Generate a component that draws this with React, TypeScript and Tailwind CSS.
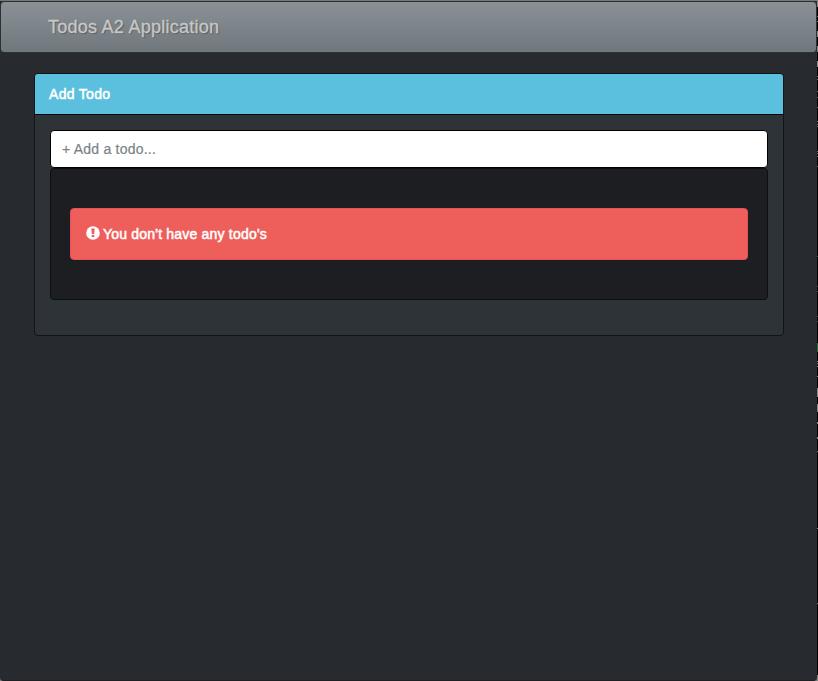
function AlertIcon() {
  return (
    <svg viewBox="0 0 14 14" className="mr-[3px] mb-[2px] size-[14px] shrink-0">
      <circle cx="7" cy="7" r="6.8" fill="#fff" />
      <path d="M5.3 2.6h3.4l-.5 5.3H5.8z" fill="#ee5f5b" />
      <rect x="5.7" y="8.9" width="2.6" height="2.2" fill="#ee5f5b" />
    </svg>
  );
}

const edgeMarks = [
  { y: 0, h: 7, fill: "#858585" },
  { y: 16, h: 1, fill: "#737373" },
  { y: 21, h: 1, fill: "#737373" },
  { y: 31, h: 6, fill: "#858585" },
  { y: 46, h: 6, fill: "#858585" },
  { y: 61, h: 6, fill: "#858585" },
  { y: 76, h: 1, fill: "#737373" },
  { y: 79, h: 1, fill: "#737373" },
  { y: 91, h: 1, fill: "#737373" },
  { y: 97, h: 1, fill: "#737373" },
  { y: 107, h: 1, fill: "#737373" },
  { y: 121, h: 1, fill: "#737373" },
  { y: 124, h: 1, fill: "#737373" },
  { y: 126, h: 1, fill: "#737373" },
  { y: 151, h: 1, fill: "#737373" },
  { y: 153, h: 1, fill: "#737373" },
  { y: 156, h: 1, fill: "#737373" },
  { y: 166, h: 1, fill: "#737373" },
  { y: 256, h: 1, fill: "#276b36" },
  { y: 286, h: 1, fill: "#4a4a4a" },
  { y: 291, h: 1, fill: "#4a4a4a" },
  { y: 316, h: 1, fill: "#4a4a4a" },
  { y: 321, h: 1, fill: "#4a4a4a" },
  { y: 343, h: 9, fill: "#276b36" },
  { y: 361, h: 1, fill: "#858585" },
  { y: 363, h: 1, fill: "#858585" },
  { y: 366, h: 1, fill: "#858585" },
  { y: 376, h: 1, fill: "#858585" },
  { y: 388, h: 9, fill: "#858585" },
  { y: 404, h: 8, fill: "#858585" },
  { y: 422, h: 2, fill: "#858585" },
  { y: 437, h: 2, fill: "#858585" },
  { y: 451, h: 1, fill: "#858585" },
  { y: 528, h: 1, fill: "#858585" },
  { y: 603, h: 1, fill: "#858585" },
  { y: 675, h: 6, fill: "#858585" },
];

export default function App() {
  return (
    <div className="flex h-[681px] w-[818px] overflow-hidden bg-black font-['Helvetica_Neue','Liberation_Sans',sans-serif] text-sm leading-5">
      <div className="flex w-[817px] shrink-0 flex-col bg-[#797873]">
        <div className="mt-px flex h-[680px] flex-col rounded-b-[4px] border-b border-[#1f2023] bg-[#272b30]">
          <nav className="flex h-[52px] shrink-0 items-center rounded-[4px] border border-[#2b3034] bg-linear-to-b from-[#8a9196] via-[#7a8288] via-60% to-[#70787d] pl-[47px]">
            <h1 className="text-[18px] leading-5 tracking-[0.26px] text-[#c8c8c8] [-webkit-text-stroke:0.3px_#c8c8c8] [text-shadow:1px_1px_1px_rgba(0,0,0,0.3)]">Todos A2 Application</h1>
          </nav>
          <main className="px-[34px] pt-5">
            <section className="h-[263px] w-[750px] rounded-[4px] border border-[#111416] bg-[#2e3338]">
              <header className="flex h-[41px] items-center rounded-t-[3px] border-b border-[#050709] bg-[#5bc0de] px-[14px] tracking-[0.3px] text-white [-webkit-text-stroke:0.5px_white]">
                Add Todo
              </header>
              <div className="px-[15px] pt-[15px]">
                <input
                  aria-label="Add a todo"
                  placeholder="+ Add a todo..."
                  className="block h-[38px] w-full rounded-[4px] border border-black bg-white px-[11px] text-sm tracking-[0.22px] text-[#272b30] outline-none placeholder:text-[#7a8288] placeholder:opacity-100 placeholder:[-webkit-text-stroke:0.2px_#7a8288]"
                />
                <div className="h-[132px] rounded-[4px] border border-[#0c0e10] bg-[#1c1e22] px-[19px] pt-[39px]">
                  <div role="alert" className="flex h-[52px] items-center rounded-[4px] border border-[#e9505b] bg-[#ee5f5b] px-[15px] tracking-[0.2px] text-white [-webkit-text-stroke:0.5px_white]">
                    <AlertIcon />
                    <span>You don't have any todo's</span>
                  </div>
                </div>
              </div>
            </section>
          </main>
        </div>
      </div>
      <svg width="1" height="681" viewBox="0 0 1 681" className="shrink-0">
        {edgeMarks.map((mark) => (
          <rect key={mark.y} x="0" y={mark.y} width="1" height={mark.h} fill={mark.fill} />
        ))}
      </svg>
    </div>
  );
}
